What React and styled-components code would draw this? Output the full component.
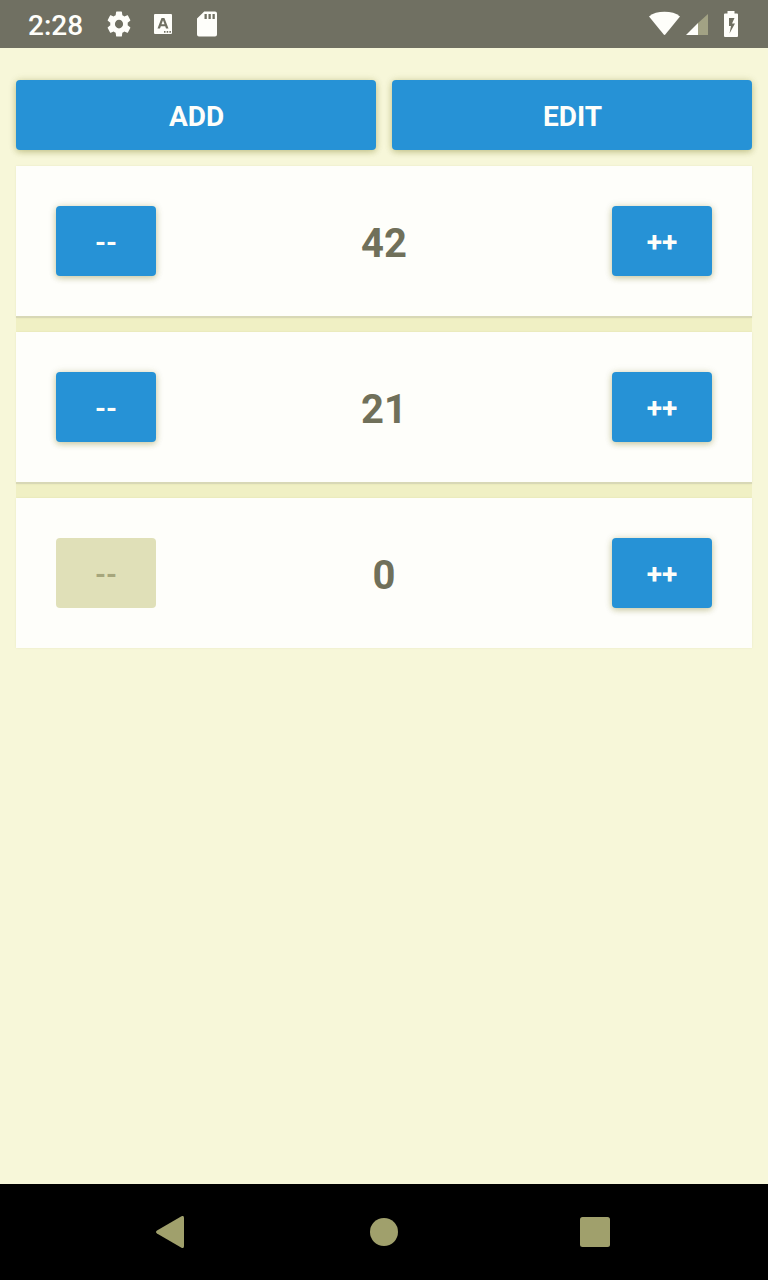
import React, { useState } from "react";
import styled, { createGlobalStyle } from "styled-components";

const GlobalStyle = createGlobalStyle`
  body { margin: 0; background: #f7f7d9; }
  * { box-sizing: border-box; }
`;

const Screen = styled.div`
  width: 768px;
  height: 1280px;
  display: flex;
  flex-direction: column;
  overflow: hidden;
  background: #f7f7d9;
  font-family: Roboto, "Liberation Sans", sans-serif;
`;

const StatusBar = styled.header`
  height: 48px;
  flex: none;
  display: flex;
  align-items: center;
  padding: 0 28px;
  background: #707062;
  color: #fefefa;
`;

const Clock = styled.span`
  width: 77px;
  padding-top: 3px;
  font-size: 28px;
  line-height: 32px;
  font-weight: 500;
`;

const StatusIcons = styled.div`
  display: flex;
  align-items: center;
  gap: ${(p) => p.$gap}px;
  margin-left: ${(p) => (p.$end ? "auto" : 0)};
`;

const Icon = styled.svg`
  display: block;
  flex: none;
  fill: #fefefa;
`;

const KeyboardIcon = styled(Icon)`
  margin-right: 4px;
`;

const BatteryIcon = styled(Icon)`
  margin: 0 2px 0 10px;
`;

const Content = styled.main`
  flex: 1;
  display: flex;
  flex-direction: column;
  padding: 32px 16px 0;
`;

const Actions = styled.div`
  display: grid;
  grid-template-columns: 1fr 1fr;
  gap: 16px;
  margin-bottom: 16px;
`;

const Button = styled.button`
  width: ${(p) => (p.$small ? "100px" : "100%")};
  height: 70px;
  padding: ${(p) => (p.$small ? "3px 0 0" : "3px 0 0 1px")};
  border: 0;
  border-radius: 4px;
  background: #2692d6;
  color: #fefefa;
  font: 700 28px/32px Roboto, "Liberation Sans", sans-serif;
  box-shadow: 0 2px 6px rgba(110, 110, 10, 0.32), 0 0 8px rgba(110, 110, 10, 0.12);

  &:disabled {
    background: #e0e0b8;
    color: #a6a67c;
    box-shadow: none;
  }
`;

const List = styled.div`
  display: flex;
  flex-direction: column;
  gap: 14px;
  background: #f0f0c4;
`;

const Card = styled.section`
  height: 152px;
  display: flex;
  align-items: center;
  justify-content: space-between;
  padding: 0 40px;
  background: #fefefa;
  border-bottom: 2px solid #d8d8b6;
  box-shadow: 0 0 2px rgba(110, 110, 10, 0.1);

  &:last-child {
    height: 150px;
    border-bottom: 0;
  }
`;

const Count = styled.span`
  padding-top: 5px;
  color: #70705a;
  font-size: 40px;
  line-height: 48px;
  font-weight: 700;
`;

const NavigationBar = styled.nav`
  height: 96px;
  flex: none;
  display: flex;
  align-items: center;
  justify-content: space-between;
  padding: 0 158px 0 156px;
  background: #000;
`;

const NavIcon = styled.svg`
  display: block;
  fill: #a0a06c;
`;

const HomeIcon = styled(NavIcon)`
  margin-left: 4px;
`;

function StatusBarContent() {
  return (
    <StatusBar>
      <Clock>2:28</Clock>
      <StatusIcons $gap={20}>
        <Icon width="28" height="30" viewBox="0 0 24 24" preserveAspectRatio="none">
          <path d="M19.43 12.98c.04-.32.07-.64.07-.98s-.03-.66-.07-.98l2.11-1.65c.19-.15.24-.42.12-.64l-2-3.46c-.12-.22-.39-.3-.61-.22l-2.49 1c-.52-.4-1.08-.73-1.69-.98l-.38-2.65C14.46 2.18 14.25 2 14 2h-4c-.25 0-.46.18-.49.42l-.38 2.65c-.61.25-1.17.59-1.69.98l-2.49-1c-.23-.09-.49 0-.61.22l-2 3.46c-.13.22-.07.49.12.64l2.11 1.65c-.04.32-.07.65-.07.98s.03.66.07.98l-2.11 1.65c-.19.15-.24.42-.12.64l2 3.46c.12.22.39.3.61.22l2.49-1c.52.4 1.08.73 1.69.98l.38 2.65c.03.24.24.42.49.42h4c.25 0 .46-.18.49-.42l.38-2.65c.61-.25 1.17-.59 1.69-.98l2.49 1c.23.09.49 0 .61-.22l2-3.46c.12-.22.07-.49-.12-.64l-2.11-1.65zM12 15.5a3.5 3.5 0 1 1 0-7 3.5 3.5 0 0 1 0 7z" />
        </Icon>
        <KeyboardIcon width="20" height="22" viewBox="0 0 20 22">
          <path fillRule="evenodd" d="M2 1h16q1 0 1 1v18q0 1-1 1H2q-1 0-1-1V2q0-1 1-1zm6.500 4L4.500 15.500H7l.8-2.300h4.400l.8 2.300h2.500L11.400 5zm0 6.200L10 7.300l1.500 3.900zM11 18v1.700h1.500V18zm2.700 0v1.700h1.500V18zm2.700 0v1.700h1.500V18z" />
        </KeyboardIcon>
        <Icon width="20" height="26" viewBox="0 0 20 26">
          <path fillRule="evenodd" d="M7.2.5H18q2 0 2 2v21q0 2-2 2H2q-2 0-2-2V7.500zM7.500 3v5h2.300V3zm4 0v5h2.300V3zm4 0v5h2.300V3z" />
        </Icon>
      </StatusIcons>
      <StatusIcons $gap={6} $end>
        <Icon width="32" height="26" viewBox="0 0 32 26">
          <path d="M1 5.500C5 2.200 10.200.8 16.500.8S28 2.200 32 5.500L17.500 23.300q-1 1.200-2 0z" />
        </Icon>
        <Icon width="22" height="24" viewBox="0 0 22 24">
          <path fill="#a2a284" d="M12 11 22 2v21H12z" />
          <path d="M0 23 12 11v12z" />
        </Icon>
        <BatteryIcon width="14" height="28" viewBox="0 0 14 28">
          <path fillRule="evenodd" d="M3.500 1h7v2.500H13q1 0 1 1V26q0 1-1 1H1q-1 0-1-1V4.500q0-1 1-1h2.500zM5 8v8h2l-1.500 7.500L11 13.500H8L10.500 8z" />
        </BatteryIcon>
      </StatusIcons>
    </StatusBar>
  );
}

export default function App() {
  const [counters, setCounters] = useState([42, 21, 0]);
  const change = (index, amount) =>
    setCounters((values) => values.map((v, i) => (i === index ? Math.max(0, v + amount) : v)));

  return (
    <>
      <GlobalStyle />
      <Screen>
        <StatusBarContent />
        <Content>
          <Actions>
            <Button onClick={() => setCounters((values) => [...values, 0])}>ADD</Button>
            <Button>EDIT</Button>
          </Actions>
          <List>
            {counters.map((value, index) => (
              <Card key={index}>
                <Button $small disabled={value === 0} onClick={() => change(index, -1)}>--</Button>
                <Count>{value}</Count>
                <Button $small onClick={() => change(index, 1)}>++</Button>
              </Card>
            ))}
          </List>
        </Content>
        <NavigationBar>
          <NavIcon width="28" height="32" viewBox="0 0 28 32">
            <path d="M1 14.500 25.500.300Q28-.800 28 2v28q0 2.800-2.500 1.700L1 17.500q-2-1.500 0-3z" />
          </NavIcon>
          <HomeIcon width="28" height="28" viewBox="0 0 28 28">
            <circle cx="14" cy="14" r="14" />
          </HomeIcon>
          <NavIcon width="30" height="30" viewBox="0 0 30 30">
            <rect width="30" height="30" rx="2.500" />
          </NavIcon>
        </NavigationBar>
      </Screen>
    </>
  );
}
